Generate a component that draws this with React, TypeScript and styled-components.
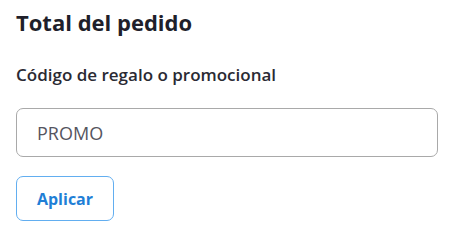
import React from 'react'
import styled, { createGlobalStyle } from 'styled-components'

const GlobalStyle = createGlobalStyle`
  body {
    margin: 0;
    background: #ffffff;
    font-family: 'Open Sans', 'Noto Sans', sans-serif;
  }
`

const Container = styled.section`
  padding: 7px 17px 12px 16px;
  display: flex;
  flex-direction: column;
`

const Title = styled.h2`
  margin: 0;
  font-size: 22px;
  font-weight: 700;
  line-height: 30px;
  color: #1f1f2b;
`

const Label = styled.label`
  margin-top: 26px;
  font-size: 17px;
  font-weight: 600;
  line-height: 24px;
  color: #2a2a33;
`

const Input = styled.input`
  margin-top: 21px;
  height: 49px;
  box-sizing: border-box;
  border: 1px solid #a9a9a9;
  border-radius: 7px;
  padding: 0 20px;
  font-family: inherit;
  font-size: 18px;
  color: #555560;
  outline: none;
`

const Button = styled.button`
  margin-top: 19px;
  align-self: flex-start;
  width: 98px;
  height: 45px;
  box-sizing: border-box;
  background: #ffffff;
  border: 1px solid #62aef0;
  border-radius: 7px;
  font-family: inherit;
  font-size: 16px;
  font-weight: 700;
  color: #1f7fd6;
  cursor: pointer;
`

const App: React.FC = () => (
  <>
    <GlobalStyle />
    <Container>
      <Title>Total del pedido</Title>
      <Label htmlFor="promo">Código de regalo o promocional</Label>
      <Input id="promo" defaultValue="PROMO" />
      <Button>Aplicar</Button>
    </Container>
  </>
)

export default App
